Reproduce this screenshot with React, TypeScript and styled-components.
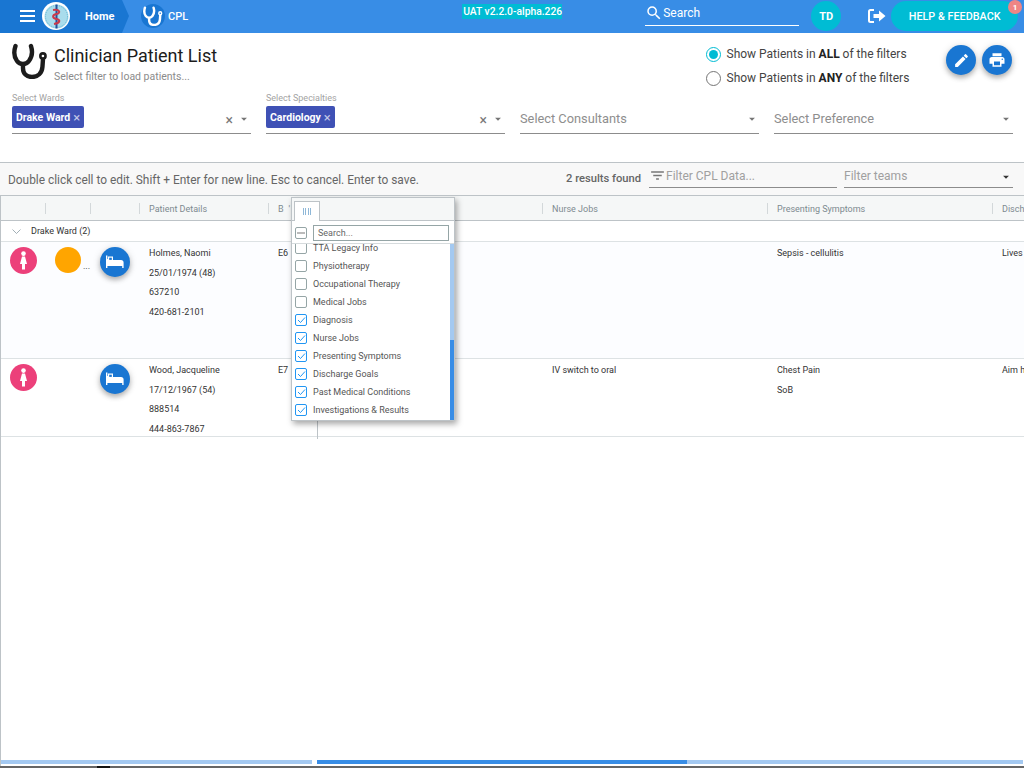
import React, { FunctionComponent } from 'react';
import styled, { createGlobalStyle } from 'styled-components';
import { MdCreate, MdPrint, MdFilterList, MdSearch, MdArrowDropDown } from 'react-icons/md';

const Global = createGlobalStyle`
  html, body { margin: 0; padding: 0; background: #fff; }
  body { font-family: Roboto, "Liberation Sans", sans-serif; color: #222; }
`;

const Page = styled.div`
  width: 1024px;
  height: 768px;
  overflow: hidden;
  display: flex;
  flex-direction: column;
  position: relative;
  background: #fff;
`;

/* top bar */
const TopBar = styled.header`
  height: 33px;
  flex: none;
  box-sizing: border-box;
  padding-bottom: 1px;
  display: flex;
  align-items: center;
  background: #388de6;
  color: #fff;
`;

const HomeCrumb = styled.div`
  width: 129px;
  height: 33px;
  margin-bottom: -1px;
  padding-bottom: 1px;
  box-sizing: border-box;
  flex: none;
  display: flex;
  align-items: center;
  background: #1976d2;
  clip-path: polygon(0 0, 122px 0, 129px 16px, 122px 33px, 0 33px);
`;

const Burger = styled.div`
  width: 15px;
  height: 12px;
  margin-left: 20px;
  border-top: 2px solid #fff;
  border-bottom: 2px solid #fff;
  box-sizing: border-box;
  position: relative;
  &::after {
    content: '';
    position: absolute;
    left: 0;
    right: 0;
    top: 3px;
    height: 2px;
    background: #fff;
  }
`;

const Logo = styled.div`
  width: 28px;
  height: 28px;
  margin-left: 7px;
  border-radius: 50%;
  background: #fff;
  display: flex;
  align-items: center;
  justify-content: center;
`;

const CrumbLabel = styled.span`
  margin-left: 15px;
  font-size: 11px;
  font-weight: 700;
`;

const CplBadge = styled.div`
  width: 24px;
  height: 24px;
  margin-left: 12px;
  border-radius: 50%;
  background: #1976d2;
  display: flex;
  align-items: center;
  justify-content: center;
`;

const CplLabel = styled.span`
  margin-left: 3px;
  font-size: 11px;
  font-weight: 500;
`;

const Version = styled.div`
  width: 192px;
  margin-left: 274px;
  align-self: flex-start;
  margin-top: 4px;
  font-size: 10.3px;
  line-height: 15px;
  font-weight: 500;
  color: #fff;
  & > span {
    display: inline-block;
    background: #00bcd4;
    padding-left: 1px;
  }
`;

const SearchBox = styled.div`
  width: 154px;
  height: 26px;
  margin-left: -9px;
  align-self: flex-start;
  box-sizing: border-box;
  border-bottom: 1px solid #fff;
  display: flex;
  align-items: center;
  font-size: 12px;
`;

const Avatar = styled.div`
  width: 30px;
  height: 30px;
  margin-left: 12px;
  flex: none;
  border-radius: 50%;
  background: #00bcd4;
  display: flex;
  align-items: center;
  justify-content: center;
  font-size: 11px;
  font-weight: 700;
`;

const LogoutIcon = styled.svg`
  margin-left: 27px;
  flex: none;
`;

const HelpButton = styled.div`
  width: 127px;
  height: 30px;
  margin-left: 5px;
  flex: none;
  border-radius: 15px;
  background: #00bcd4;
  display: flex;
  align-items: center;
  justify-content: center;
  font-size: 10.8px;
  font-weight: 500;
  position: relative;
`;

const Badge = styled.span`
  position: absolute;
  right: -4px;
  top: -1px;
  width: 14px;
  height: 14px;
  border-radius: 50%;
  background: #ef8585;
  font-size: 8px;
  font-weight: 700;
  display: flex;
  align-items: center;
  justify-content: center;
`;

/* title + filters */
const FilterPanel = styled.section`
  height: 129px;
  flex: none;
  box-sizing: border-box;
  padding: 10px 12px 0;
`;

const TitleRow = styled.div`
  display: flex;
  align-items: flex-start;
  height: 49px;
`;

const TitleText = styled.div`
  margin-left: 6px;
  margin-top: 2px;
  width: 653px;
`;

const Title = styled.h1`
  margin: 0;
  font-size: 18px;
  line-height: 22px;
  font-weight: 400;
  color: #1c1c1c;
`;

const Subtitle = styled.div`
  margin-top: 4px;
  font-size: 10.5px;
  line-height: 12px;
  color: #8b8b8b;
`;

const Radios = styled.div`
  width: 240px;
  margin-top: 3px;
  display: flex;
  flex-direction: column;
  gap: 8px;
`;

const RadioRow = styled.div`
  display: flex;
  align-items: center;
  gap: 6px;
  height: 16px;
  font-size: 12px;
  color: #444;
  & b { font-weight: 700; color: #222; }
`;

const RadioDot = styled.span<{ $on?: boolean }>`
  width: 15px;
  height: 15px;
  box-sizing: border-box;
  border-radius: 50%;
  border: 1px solid ${({ $on }) => ($on ? '#00bcd4' : '#757575')};
  display: flex;
  align-items: center;
  justify-content: center;
  &::after {
    content: '';
    display: ${({ $on }) => ($on ? 'block' : 'none')};
    width: 9px;
    height: 9px;
    border-radius: 50%;
    background: #00bcd4;
  }
`;

const Fabs = styled.div`
  display: flex;
  gap: 6px;
  margin-left: 1px;
  margin-top: 2px;
`;

const Fab = styled.div`
  width: 30px;
  height: 30px;
  flex: none;
  border-radius: 50%;
  background: #1976d2;
  color: #fff;
  display: flex;
  align-items: center;
  justify-content: center;
  box-shadow: 0 3px 5px rgba(0, 0, 0, 0.25), 0 1px 8px rgba(0, 0, 0, 0.12);
`;

const SelectRow = styled.div`
  display: grid;
  grid-template-columns: 239px 239px 239px 239px;
  column-gap: 15px;
  margin-top: 1px;
`;

const SelectBox = styled.div`
  height: 41px;
  box-sizing: border-box;
  border-bottom: 1px solid #8c8c8c;
  position: relative;
  display: flex;
  align-items: flex-end;
  padding-bottom: 6px;
`;

const SelectCaption = styled.span`
  position: absolute;
  left: 0;
  top: 0;
  font-size: 9px;
  line-height: 11px;
  color: #a3a3a3;
`;

const Placeholder = styled.span`
  font-size: 12.8px;
  line-height: 16px;
  color: #8e8e8e;
`;

const Chip = styled.span`
  height: 22px;
  box-sizing: border-box;
  padding: 0 4px;
  border-radius: 2px;
  background: #3f51b5;
  color: #fff;
  font-size: 10.5px;
  font-weight: 700;
  display: inline-flex;
  align-items: center;
  gap: 3px;
  margin-bottom: -1px;
  & > i {
    font-style: normal;
    font-weight: 400;
    font-size: 13px;
    color: #c3c8e8;
  }
`;

const Clear = styled.span`
  position: absolute;
  right: 18px;
  bottom: 7px;
  font-size: 14px;
  line-height: 12px;
  color: #777;
`;

const Caret = styled.span`
  position: absolute;
  right: 0;
  bottom: 7px;
  display: flex;
  color: #757575;
`;

const TeamCaret = styled(Caret)`
  bottom: 3px;
  color: #333;
`;

/* toolbar above the grid */
const Toolbar = styled.div`
  height: 33px;
  flex: none;
  box-sizing: border-box;
  border-top: 1px solid #bdc3c7;
  background: #f8f8f8;
  display: flex;
  align-items: center;
  padding-left: 8px;
`;

const Hint = styled.span`
  width: 558px;
  flex: none;
  margin-top: 2px;
  font-size: 11.9px;
  color: #666;
`;

const ResultCount = styled.span`
  width: 83px;
  flex: none;
  margin-bottom: 1px;
  font-size: 11.2px;
  font-weight: 500;
  color: #666;
`;

const ToolInput = styled.div<{ $w: number; $gap: number }>`
  width: ${({ $w }) => $w}px;
  margin-left: ${({ $gap }) => $gap}px;
  height: 25px;
  flex: none;
  align-self: flex-start;
  box-sizing: border-box;
  padding-top: 1px;
  border-bottom: 1px solid #8c8c8c;
  display: flex;
  align-items: center;
  font-size: 12px;
  color: #a0a0a0;
  position: relative;
`;

/* data grid */
const GridWrap = styled.div`
  flex: 1;
  min-height: 0;
  position: relative;
  box-sizing: border-box;
  border-top: 1px solid #bdc3c7;
  border-left: 1px solid #bdc3c7;
  overflow: hidden;
`;

const columns = '44px 45px 49px 129px 49px 225px 225px 225px 40px';

const HeaderRow = styled.div`
  display: grid;
  grid-template-columns: ${columns};
  height: 25px;
  box-sizing: border-box;
  border-bottom: 1px solid #bdc3c7;
  background: #f5f7f7;
  font-size: 9px;
  color: #7d8a90;
  width: 1100px;
`;

const HeadCell = styled.div`
  display: flex;
  align-items: center;
  padding: 1px 0 0 10px;
  position: relative;
  white-space: nowrap;
  &:not(:first-child)::before {
    content: '';
    position: absolute;
    left: 0;
    top: 7px;
    height: 11px;
    width: 1px;
    background: #d3d8da;
  }
`;

const SortMark = styled.span`
  margin-left: 5px;
`;

const GroupRow = styled.div`
  height: 21px;
  box-sizing: border-box;
  border-bottom: 1px solid #dde2e4;
  display: flex;
  align-items: center;
  padding-left: 11px;
  gap: 10px;
  font-size: 9px;
  color: #333;
`;

const PatientRow = styled.div<{ $h: number; $tint?: boolean }>`
  display: grid;
  grid-template-columns: ${columns};
  height: ${({ $h }) => $h}px;
  width: 1100px;
  box-sizing: border-box;
  border-bottom: 1px solid #dde2e4;
  background: ${({ $tint }) => ($tint ? '#fcfdff' : '#fff')};
  font-size: 9px;
  color: #333;
`;

const IconCell = styled.div`
  padding: 5px 0 0 10px;
  position: relative;
`;

const Female = styled.div`
  width: 27px;
  height: 27px;
  margin-left: -1px;
  border-radius: 50%;
  background: #ec407a;
  color: #fff;
  display: flex;
  align-items: center;
  justify-content: center;
`;

const Flag = styled.div`
  width: 26px;
  height: 26px;
  border-radius: 50%;
  background: #ffa500;
`;

const Dots = styled.span`
  position: absolute;
  left: 38px;
  top: 18px;
  font-size: 9px;
  line-height: 12px;
  color: #333;
`;

const DataCell = styled.div<{ $line?: boolean }>`
  padding-left: 10px;
  ${({ $line }) => ($line ? 'border-right: 1px solid #bdc3c7; margin-right: -1px;' : '')}
  & > div {
    height: 19.5px;
    line-height: 19.5px;
    white-space: nowrap;
  }
  & > div:first-child { margin-top: 2px; }
`;

/* columns popup */
const ColumnMenu = styled.div`
  position: absolute;
  left: 290px;
  top: 1px;
  width: 164px;
  height: 224px;
  box-sizing: border-box;
  border: 1px solid #bdc3c7;
  background: #fff;
  box-shadow: 2px 3px 6px rgba(0, 0, 0, 0.35);
  display: flex;
  flex-direction: column;
  overflow: hidden;
  font-size: 9px;
  color: #555;
`;

const MenuTabs = styled.div`
  height: 23px;
  flex: none;
  box-sizing: border-box;
  background: #f5f7f7;
  border-bottom: 1px solid #bdc3c7;
  padding-left: 2px;
  padding-top: 3px;
`;

const MenuTab = styled.div`
  width: 26px;
  height: 20px;
  box-sizing: border-box;
  background: #fff;
  border: 1px solid #bdc3c7;
  border-bottom: none;
  display: flex;
  align-items: center;
  justify-content: center;
  gap: 1.5px;
  & > i {
    display: block;
    width: 1px;
    height: 7px;
    background: #8fb8d8;
  }
`;

const MenuSearch = styled.div`
  height: 23px;
  flex: none;
  box-sizing: border-box;
  padding: 1px 0 0 3px;
  border-bottom: 1px solid #d6dbdd;
  display: flex;
  align-items: center;
  gap: 6px;
`;

const SearchInput = styled.div`
  width: 136px;
  height: 16px;
  box-sizing: border-box;
  border: 1px solid #95a5a6;
  padding-left: 4px;
  line-height: 14px;
  font-size: 9px;
  color: #666;
`;

const MenuBody = styled.div`
  flex: 1;
  min-height: 0;
  overflow: hidden;
  position: relative;
`;

const MenuList = styled.div`
  margin-top: -5px;
  padding-left: 3px;
`;

const MenuItem = styled.div`
  height: 18px;
  display: flex;
  align-items: center;
  gap: 6px;
  white-space: nowrap;
`;

const Check = styled.span<{ $on?: boolean }>`
  width: 12px;
  height: 12px;
  flex: none;
  box-sizing: border-box;
  border-radius: 2px;
  border: 1px solid ${({ $on }) => ($on ? '#2196f3' : '#95a5a6')};
  display: flex;
  align-items: center;
  justify-content: center;
  background: #fff;
`;

const Mixed = styled.span`
  width: 8px;
  height: 2px;
  background: #bbb;
`;

const MenuTrack = styled.div`
  position: absolute;
  right: 0;
  top: 0;
  bottom: 0;
  width: 4px;
  background: #a4c9f1;
  &::after {
    content: '';
    position: absolute;
    left: 0;
    right: 0;
    bottom: 0;
    height: 80px;
    background: #388de6;
  }
`;

/* bottom scrollbar */
const ScrollBar = styled.div`
  position: absolute;
  left: 0;
  right: 1px;
  bottom: 4px;
  height: 4px;
  display: flex;
  gap: 5px;
`;

const ScrollLeft = styled.div`
  width: 311px;
  background: #a4c9f1;
`;

const ScrollRight = styled.div`
  flex: 1;
  background: #a4c9f1;
  & > div {
    width: 370px;
    height: 4px;
    background: #388de6;
  }
`;

const BottomEdge = styled.div`
  position: absolute;
  left: 0;
  right: 0;
  bottom: 0;
  height: 2px;
  background: #666;
  &::after {
    content: '';
    position: absolute;
    left: 97px;
    top: 0;
    width: 13px;
    height: 2px;
    background: #111;
  }
`;

const Stethoscope: FunctionComponent<{ size: number; color: string }> = ({ size, color }) => (
  <svg width={size} height={size} viewBox="0 0 36 36" fill="none" stroke={color} strokeWidth="4.4" strokeLinecap="round">
    <path d="M3.5 3 C1.5 9 2 14 5 18 C8 22 14 22 17 18 C20 14 21 9 19 3" />
    <path d="M11 22 V25 C11 31 15 34 20 34 C26 34 30 30 30.5 24 L31 17" />
    <circle cx="31" cy="13" r="2.6" strokeWidth="2.6" />
  </svg>
);

const CheckMark: FunctionComponent = () => (
  <svg width="9" height="8" viewBox="0 0 9 8" fill="none" stroke="#2196f3" strokeWidth="1">
    <path d="M1 4 L3.5 6.5 L8 1.5" />
  </svg>
);

const BedIcon: FunctionComponent = () => (
  <svg width="18" height="14" viewBox="0 0 18 14" fill="#fff">
    <path d="M0 0.5 H1.4 V4 H2 V1.5 H7 V5 H15 C16.6 5 17.6 6 17.6 7.6 V13 H16.2 V11 H1.4 V13 H0 Z" />
    <rect x="3.2" y="2.7" width="2.6" height="2.2" fill="#1976d2" />
  </svg>
);

const menuItems: [string, boolean][] = [
  ['TTA Legacy Info', false],
  ['Physiotherapy', false],
  ['Occupational Therapy', false],
  ['Medical Jobs', false],
  ['Diagnosis', true],
  ['Nurse Jobs', true],
  ['Presenting Symptoms', true],
  ['Discharge Goals', true],
  ['Past Medical Conditions', true],
  ['Investigations & Results', true]
];

const FemaleIcon: FunctionComponent = () => (
  <Female>
    <svg width="9" height="19" viewBox="0 0 9 19" fill="#fff">
      <circle cx="4.5" cy="2.6" r="2.3" />
      <path d="M3 5.6 H6 L8 13 H6 V18.5 H3 V13 H1 Z" />
    </svg>
  </Female>
);

const App: FunctionComponent = () => (
  <Page>
    <Global />
    <TopBar>
      <HomeCrumb>
        <Burger />
        <Logo>
          <svg width="25" height="25" viewBox="0 0 25 25">
            <circle cx="12.5" cy="12.5" r="12" fill="#a9dcec" />
            <circle cx="12.5" cy="12.5" r="11" fill="none" stroke="#5fb4d4" strokeWidth="1" strokeDasharray="1 1" />
            <path d="M12.5 0.5 V24.5" stroke="#27509a" strokeWidth="2" />
            <path d="M9 6 C16 5 17 9 12.5 10 C8 11 8 14 12.5 15 C17 16 16 19 10 20" stroke="#c8394a" strokeWidth="2" fill="none" />
          </svg>
        </Logo>
        <CrumbLabel>Home</CrumbLabel>
      </HomeCrumb>
      <CplBadge>
        <Stethoscope size={20} color="#fff" />
      </CplBadge>
      <CplLabel>CPL</CplLabel>
      <Version>
        <span>UAT v2.2.0-alpha.226</span>
      </Version>
      <SearchBox>
        <MdSearch size={18} />
        Search
      </SearchBox>
      <Avatar>TD</Avatar>
      <LogoutIcon width="18" height="14" viewBox="0 0 18 14" fill="none">
        <path d="M6 1 H2.5 C1.5 1 1 1.5 1 2.5 V11.5 C1 12.5 1.5 13 2.5 13 H6" stroke="#fff" strokeWidth="2" />
        <path d="M5.5 5 H11 V1.5 L17.5 7 L11 12.5 V9 H5.5 Z" fill="#fff" />
      </LogoutIcon>
      <HelpButton>
        HELP &amp; FEEDBACK
        <Badge>1</Badge>
      </HelpButton>
    </TopBar>

    <FilterPanel>
      <TitleRow>
        <Stethoscope size={36} color="#1c1c1c" />
        <TitleText>
          <Title>Clinician Patient List</Title>
          <Subtitle>Select filter to load patients...</Subtitle>
        </TitleText>
        <Radios>
          <RadioRow>
            <RadioDot $on />
            <span>Show Patients in <b>ALL</b> of the filters</span>
          </RadioRow>
          <RadioRow>
            <RadioDot />
            <span>Show Patients in <b>ANY</b> of the filters</span>
          </RadioRow>
        </Radios>
        <Fabs>
          <Fab><MdCreate size={17} /></Fab>
          <Fab><MdPrint size={18} /></Fab>
        </Fabs>
      </TitleRow>
      <SelectRow>
        <SelectBox>
          <SelectCaption>Select Wards</SelectCaption>
          <Chip>Drake Ward <i>×</i></Chip>
          <Clear>×</Clear>
          <Caret><MdArrowDropDown size={14} /></Caret>
        </SelectBox>
        <SelectBox>
          <SelectCaption>Select Specialties</SelectCaption>
          <Chip>Cardiology <i>×</i></Chip>
          <Clear>×</Clear>
          <Caret><MdArrowDropDown size={14} /></Caret>
        </SelectBox>
        <SelectBox>
          <Placeholder>Select Consultants</Placeholder>
          <Caret><MdArrowDropDown size={14} /></Caret>
        </SelectBox>
        <SelectBox>
          <Placeholder>Select Preference</Placeholder>
          <Caret><MdArrowDropDown size={14} /></Caret>
        </SelectBox>
      </SelectRow>
    </FilterPanel>

    <Toolbar>
      <Hint>Double click cell to edit. Shift + Enter for new line. Esc to cancel. Enter to save.</Hint>
      <ResultCount>2 results found</ResultCount>
      <ToolInput $w={188} $gap={0}>
        <MdFilterList size={17} color="#777" />
        Filter CPL Data...
      </ToolInput>
      <ToolInput $w={169} $gap={7}>
        Filter teams
        <TeamCaret><MdArrowDropDown size={14} /></TeamCaret>
      </ToolInput>
    </Toolbar>

    <GridWrap>
      <HeaderRow>
        <HeadCell />
        <HeadCell />
        <HeadCell />
        <HeadCell>Patient Details</HeadCell>
        <HeadCell>B<SortMark>'</SortMark></HeadCell>
        <HeadCell />
        <HeadCell>Nurse Jobs</HeadCell>
        <HeadCell>Presenting Symptoms</HeadCell>
        <HeadCell>Discharge Goals</HeadCell>
      </HeaderRow>
      <GroupRow>
        <svg width="9" height="5" viewBox="0 0 9 5" fill="none" stroke="#8a9aa3" strokeWidth="0.8">
          <path d="M0.5 0.5 L4.5 4.5 L8.5 0.5" />
        </svg>
        Drake Ward (2)
      </GroupRow>
      <PatientRow $h={117} $tint>
        <IconCell><FemaleIcon /></IconCell>
        <IconCell>
          <Flag />
          <Dots>...</Dots>
        </IconCell>
        <IconCell><Fab><BedIcon /></Fab></IconCell>
        <DataCell>
          <div>Holmes, Naomi</div>
          <div>25/01/1974 (48)</div>
          <div>637210</div>
          <div>420-681-2101</div>
        </DataCell>
        <DataCell $line><div>E6</div></DataCell>
        <DataCell />
        <DataCell />
        <DataCell><div>Sepsis - cellulitis</div></DataCell>
        <DataCell><div>Lives with family</div></DataCell>
      </PatientRow>
      <PatientRow $h={78}>
        <IconCell><FemaleIcon /></IconCell>
        <IconCell />
        <IconCell><Fab><BedIcon /></Fab></IconCell>
        <DataCell>
          <div>Wood, Jacqueline</div>
          <div>17/12/1967 (54)</div>
          <div>888514</div>
          <div>444-863-7867</div>
        </DataCell>
        <DataCell $line><div>E7</div></DataCell>
        <DataCell />
        <DataCell><div>IV switch to oral</div></DataCell>
        <DataCell>
          <div>Chest Pain</div>
          <div>SoB</div>
        </DataCell>
        <DataCell><div>Aim home today</div></DataCell>
      </PatientRow>

      <ColumnMenu>
        <MenuTabs>
          <MenuTab><i /><i /><i /><i /></MenuTab>
        </MenuTabs>
        <MenuSearch>
          <Check><Mixed /></Check>
          <SearchInput>Search...</SearchInput>
        </MenuSearch>
        <MenuBody>
          <MenuList>
            {menuItems.map(([label, on]) => (
              <MenuItem key={label}>
                <Check $on={on}>{on && <CheckMark />}</Check>
                {label}
              </MenuItem>
            ))}
          </MenuList>
          <MenuTrack />
        </MenuBody>
      </ColumnMenu>

      <ScrollBar>
        <ScrollLeft />
        <ScrollRight><div /></ScrollRight>
      </ScrollBar>
    </GridWrap>
    <BottomEdge />
  </Page>
);

export default App;
